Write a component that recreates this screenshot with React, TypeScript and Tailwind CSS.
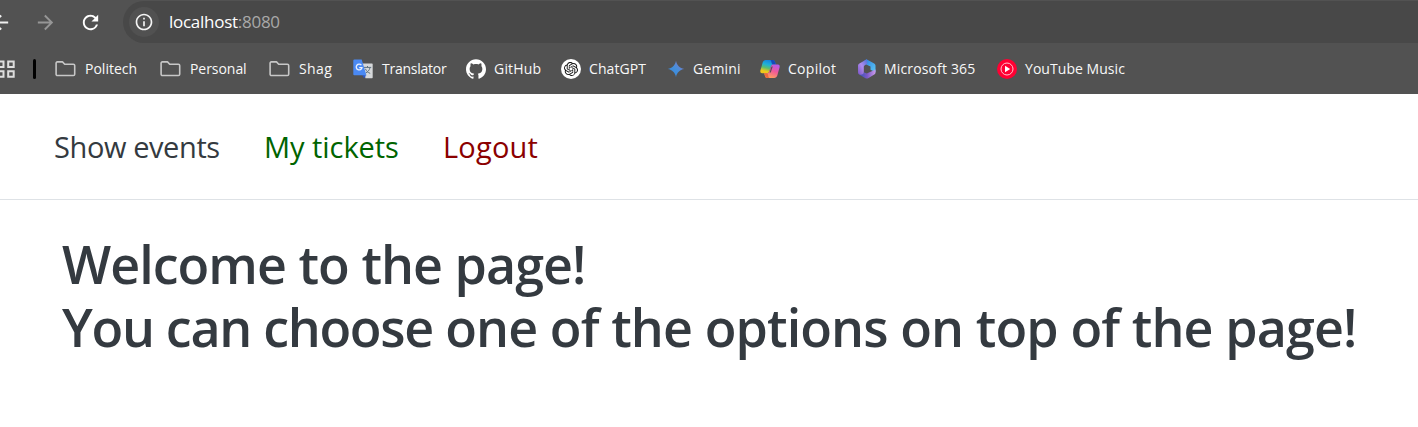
import React from "react";
import { MdArrowBack, MdArrowForward, MdRefresh, MdInfoOutline } from "react-icons/md";
import { SiGithub, SiOpenai } from "react-icons/si";

function FolderIcon() {
  return (
    <svg width="21" height="20" viewBox="0 0 21 20" fill="none" stroke="#c7c7c7" strokeWidth="1.6" strokeLinejoin="round">
      <path d="M2.3 2.9h5.2l2.2 2.3h8.7a1.3 1.3 0 0 1 1.3 1.3v8.7a1.3 1.3 0 0 1-1.3 1.3H2.4a1.3 1.3 0 0 1-1.3-1.3V4.1a1.2 1.2 0 0 1 1.2-1.2z" />
    </svg>
  );
}

function TranslatorIcon() {
  return (
    <svg width="20" height="20" viewBox="0 0 20 20">
      <path d="M8.5 4.5h10.2c.6 0 1 .4 1 1v12.8c0 .6-.4 1-1 1h-6.2z" fill="#d6d8da" />
      <path d="M10.800 8.400h7.400M14.500 7v1.400M17 8.600c-.5 2.600-2.200 4.400-4.500 5.600M12.400 9.800c.9 2.200 2.600 3.800 4.800 4.600" stroke="#5f7380" strokeWidth="1" fill="none" />
      <path d="M9.200 16.300h4.100l-2.200 3z" fill="#2a56c6" />
      <path d="M1.300.6h7.400l4.700 15.700H1.300a1 1 0 0 1-1-1V1.600a1 1 0 0 1 1-1z" fill="#4a89f3" />
      <path d="M8.400 6.200A2.900 2.900 0 1 0 9 8.600H6.200" fill="none" stroke="#e8f0fe" strokeWidth="1.3" />
    </svg>
  );
}

function GithubIcon() {
  return <SiGithub size={20} color="#ffffff" />;
}

function ChatIcon() {
  return (
    <span className="flex h-5 w-5 items-center justify-center rounded-full bg-white">
      <SiOpenai size={14} color="#111111" />
    </span>
  );
}

function GeminiIcon() {
  return (
    <svg width="20" height="20" viewBox="0 0 20 20">
      <defs>
        <linearGradient id="gemini" x1="0" y1="1" x2="1" y2="0">
          <stop offset="0" stopColor="#2f86dd" />
          <stop offset=".5" stopColor="#458fdb" />
          <stop offset="1" stopColor="#8b78c9" />
        </linearGradient>
      </defs>
      <path d="M10 1.800c.7 4.400 3.800 7.500 8.200 8.200-4.400.7-7.500 3.800-8.200 8.200-.7-4.400-3.800-7.500-8.200-8.200 4.400-.7 7.500-3.800 8.200-8.200z" fill="url(#gemini)" />
    </svg>
  );
}

function CopilotIcon() {
  return (
    <svg width="20" height="20" viewBox="0 0 20 20">
      <defs>
        <linearGradient id="cpLeft" x1=".6" y1="0" x2=".3" y2="1">
          <stop offset="0" stopColor="#1580df" />
          <stop offset=".35" stopColor="#1fb0d8" />
          <stop offset=".6" stopColor="#5bbd70" />
          <stop offset=".85" stopColor="#f0c81c" />
        </linearGradient>
        <linearGradient id="cpRight" x1=".7" y1="0" x2=".3" y2="1">
          <stop offset="0" stopColor="#b65bea" />
          <stop offset=".45" stopColor="#f0589a" />
          <stop offset="1" stopColor="#ffa45a" />
        </linearGradient>
      </defs>
      <path d="M5.800 1h7c1.200 0 1.800.8 2.200 2l.8 2.500h-2.600c-1.300 0-1.900.7-2.300 2L9.400 12c-.5 1.600-1.200 2.300-2.700 2.300H2.200C.6 14.300 0 13 .4 11.500L2.700 3.500C3.200 1.900 4.200 1 5.800 1z" fill="url(#cpLeft)" />
      <path d="M10.300 1h2.500c1.200 0 1.800.8 2.200 2l.8 2.500h-2.600c-1-.2-1.500-1-1.700-2-.2-1.300-.4-2-1.200-2.500z" fill="#1749ba" />
      <path d="M14.200 19h-7c-1.200 0-1.800-.8-2.200-2l-.8-2.700h2.500c1.500 0 2.200-.7 2.700-2.300l1.500-4.500c.4-1.300 1-2 2.300-2h4.600c1.600 0 2.200 1.300 1.800 2.800l-2.300 8.200c-.5 1.600-1.500 2.500-3.100 2.500z" fill="url(#cpRight)" />
      <path d="M4.200 14.300h2.500c1 .2 1.300 1 1.500 2 .2 1.500.4 2.200 1.400 2.700H7.200c-1.200 0-1.800-.8-2.200-2z" fill="#ed6a3a" />
      <path d="M9.600 13.600l1.900-6.200h1.200l-1.900 6.200z" fill="#525252" />
    </svg>
  );
}

function MicrosoftIcon() {
  return (
    <svg width="20" height="20" viewBox="0 0 20 20">
      <defs>
        <linearGradient id="msLeft" x1="0" y1="1" x2="1" y2="0">
          <stop offset="0" stopColor="#7a52c6" />
          <stop offset=".5" stopColor="#ae8cec" />
          <stop offset="1" stopColor="#4b6fd8" />
        </linearGradient>
        <linearGradient id="msRight" x1="0" y1="0" x2="1" y2="1">
          <stop offset="0" stopColor="#2d7fdf" />
          <stop offset="1" stopColor="#5cc8f4" />
        </linearGradient>
        <linearGradient id="msBottom" x1="0" y1="0" x2="1" y2="0">
          <stop offset="0" stopColor="#3456b5" />
          <stop offset=".5" stopColor="#7b58c8" />
          <stop offset="1" stopColor="#cb9bea" />
        </linearGradient>
      </defs>
      <path d="M9.500.2l7.700 4.300c.8.5 1.300 1.200 1.300 2.200v6.500l-5-2.500V7.600L7 4.500V2z" fill="url(#msRight)" />
      <path d="M18.500 10.500v3c0 .9-.4 1.500-1.200 2l-6.100 3.700c-.9.500-1.800.5-2.700 0L2 15.500l4.800-2.200 3 1.100z" fill="url(#msBottom)" />
      <path d="M9.800.2L2.400 4.500C1.500 5 1 5.700 1 6.700v6.600c0 1.200.5 1.900 1.500 2.300 2 .8 4.300-.4 4.300-2.500V8.200c0-1 .4-1.700 1.300-2.200l2.300-1.300z" fill="url(#msLeft)" />
    </svg>
  );
}

function MusicIcon() {
  return (
    <svg width="20" height="20" viewBox="0 0 20 20">
      <circle cx="10" cy="10" r="10" fill="#ff0033" />
      <circle cx="10" cy="10" r="6" fill="none" stroke="#ffc2cd" strokeWidth="1" />
      <path d="M8 6.800l5.200 3.200L8 13.200z" fill="#fff" />
    </svg>
  );
}

const bookmarks = [
  { label: "Politech", icon: <FolderIcon />, box: "w-[105px]", text: "tracking-[0px]" },
  { label: "Personal", icon: <FolderIcon />, box: "w-[109px]", text: "tracking-[-0.05px]" },
  { label: "Shag", icon: <FolderIcon />, box: "w-[84px]", text: "tracking-[0.4px]" },
  { label: "Translator", icon: <TranslatorIcon />, box: "w-[113px]", text: "tracking-[-0.25px] -ml-px" },
  { label: "GitHub", icon: <GithubIcon />, box: "w-[95px]", text: "tracking-[0.2px] -ml-[2px]" },
  { label: "ChatGPT", icon: <ChatIcon />, box: "w-[105px]", text: "tracking-[0.1px] -ml-[2px]" },
  { label: "Gemini", icon: <GeminiIcon />, box: "w-[94px]", text: "tracking-[0.2px] -ml-[3px]" },
  { label: "Copilot", icon: <CopilotIcon />, box: "w-[97px]", text: "tracking-[0.3px] -ml-[2px]" },
  { label: "Microsoft 365", icon: <MicrosoftIcon />, box: "w-[140px]", text: "tracking-[0.15px] -ml-[3px]" },
  { label: "YouTube Music", icon: <MusicIcon />, box: "w-[140px]", text: "tracking-[0.05px] -ml-[2px]" },
];

function AddressRow() {
  return (
    <div className="flex h-[44px] items-center overflow-hidden">
      <MdArrowBack size={23} color="#f0f0f0" className="-ml-[11px] shrink-0" />
      <MdArrowForward size={23} color="#969696" className="ml-[22px] shrink-0" />
      <MdRefresh size={23} color="#ffffff" className="ml-[22px] shrink-0" />
      <div className="mt-px mb-px ml-[21px] flex h-[42px] flex-1 items-center rounded-l-full bg-[#484848]">
        <span className="ml-[6px] flex h-[30px] w-[30px] items-center justify-center rounded-full bg-[#515151]">
          <MdInfoOutline size={20} color="#f4f4f4" />
        </span>
        <span className="ml-[10px] text-[17px] tracking-[-0.27px] text-white">
          localhost<span className="text-[#a9a9a9]">:8080</span>
        </span>
      </div>
    </div>
  );
}

function BookmarksRow() {
  return (
    <div className="flex h-[50px] items-center">
      <svg width="15" height="20" viewBox="0 0 15 20" fill="none" stroke="#dedede" strokeWidth="2" className="shrink-0">
        <path d="M-2 2.500h5.500v5.500h-5.500zM8.200 2.500h5.500v5.500h-5.500zM-2 12.300h5.500v5.500h-5.500zM8.200 12.300h5.500v5.500h-5.500z" />
      </svg>
      <span className="ml-[18px] h-5 w-[3px] rounded-sm bg-black" />
      <div className="ml-[19px] flex">
        {bookmarks.map((b) => (
          <div key={b.label} className={`flex shrink-0 items-center ${b.box}`}>
            <span className="flex w-[21px] shrink-0 items-center">{b.icon}</span>
            <span className="ml-[9px] flex">
              <span className={`text-[14px] leading-5 whitespace-nowrap text-[#f8f8f8] ${b.text}`}>{b.label}</span>
            </span>
          </div>
        ))}
      </div>
    </div>
  );
}

export default function App() {
  return (
    <div className="h-[427px] overflow-hidden bg-white font-['Open_Sans',sans-serif]">
      <header className="h-[94px] bg-[#525252]">
        <AddressRow />
        <BookmarksRow />
      </header>
      <nav className="flex h-[106px] items-center border-b border-[#dee2e6] pl-[54px] text-[29px] leading-10 whitespace-nowrap">
        <a className="w-[210px] tracking-[-0.4px] text-[#343a40]">Show events</a>
        <a className="w-[179px] tracking-[-0.05px] text-[#006400]">My tickets</a>
        <a className="tracking-[0.2px] text-[#8b0000]">Logout</a>
      </nav>
      <main className="pt-[32px] pl-[62px] text-[52px] leading-[63px] font-semibold whitespace-nowrap text-[#343a40]">
        <p className="tracking-[-0.97px]">Welcome to the page!</p>
        <p className="tracking-[-0.9px]">
          <span className="tracking-[-1.3px]">You can choose </span>one of the options on top of the page!
        </p>
      </main>
    </div>
  );
}
